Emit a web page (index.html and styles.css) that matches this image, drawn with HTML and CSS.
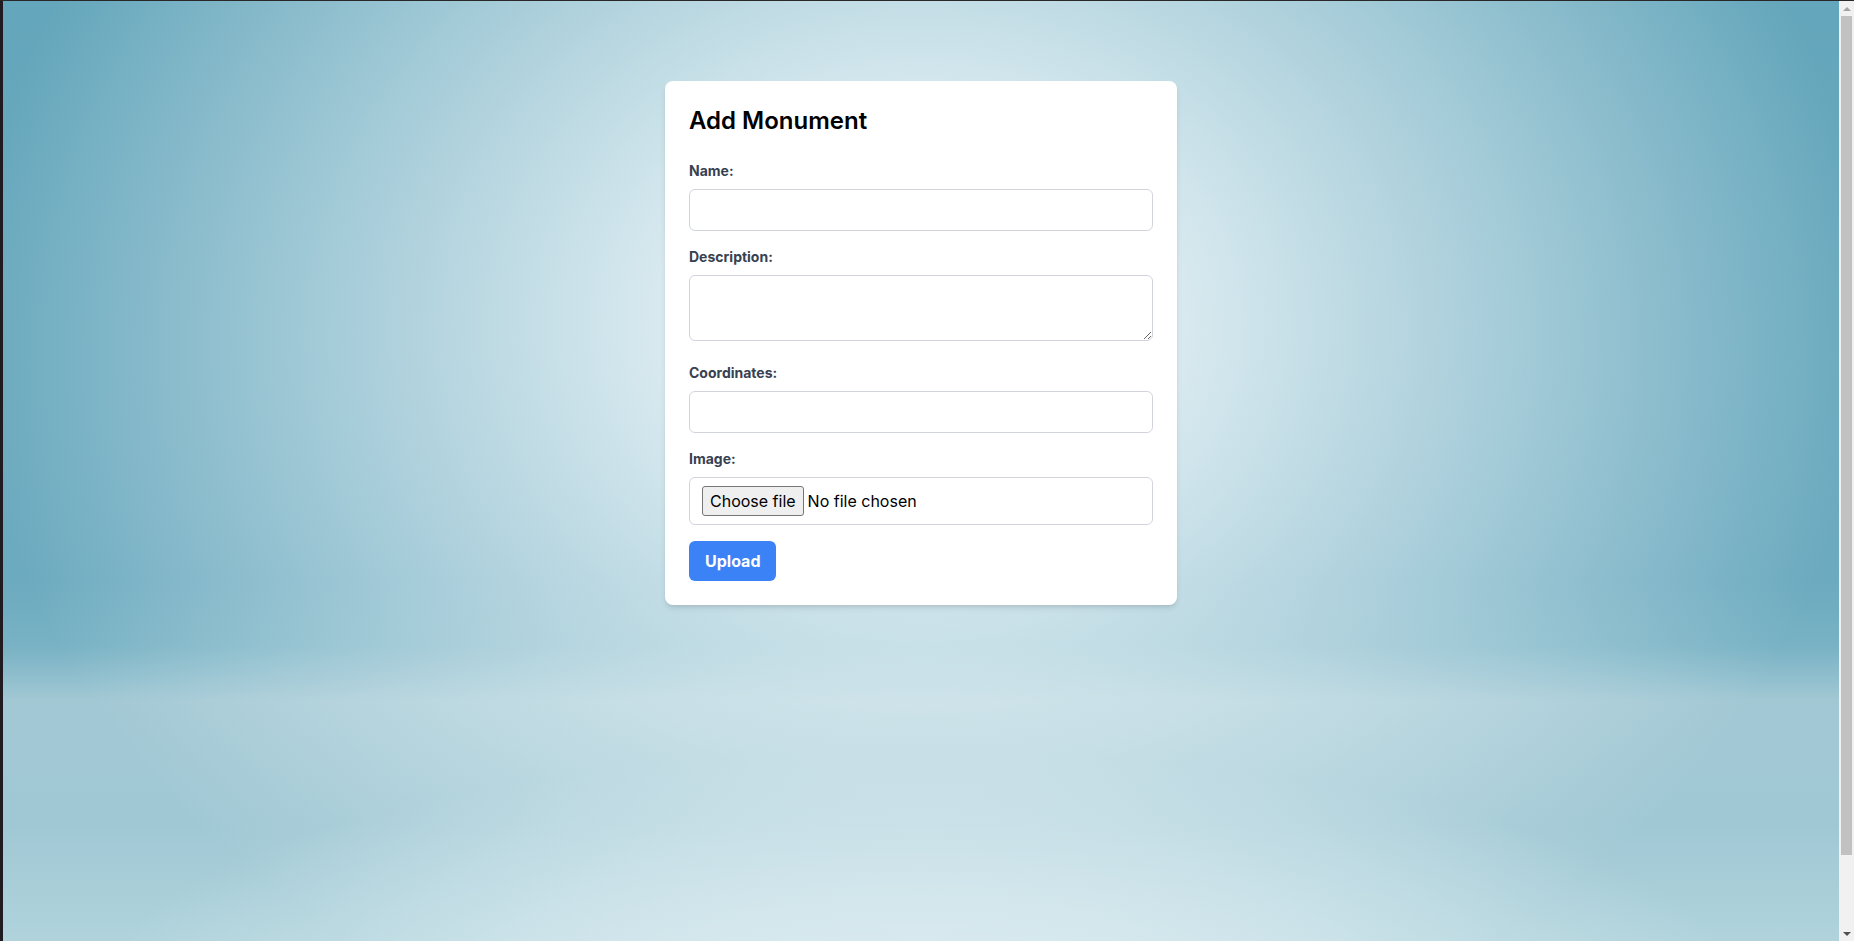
FILE: index.html
```html
<!DOCTYPE html>
<html lang="en">
<head>
<meta charset="utf-8">
<title>Add Monument</title>
<link rel="stylesheet" href="styles.css">
</head>
<body>
<div class="frame">
  <main class="viewport">
    <form class="card" onsubmit="return false">
      <h2 class="card-title">Add Monument</h2>
      <div class="field">
        <label class="field-label" for="name">Name:</label>
        <input class="field-input" id="name" type="text">
      </div>
      <div class="field">
        <label class="field-label" for="description">Description:</label>
        <textarea class="field-input" id="description" rows="2"></textarea>
      </div>
      <div class="field">
        <label class="field-label" for="coordinates">Coordinates:</label>
        <input class="field-input" id="coordinates" type="text">
      </div>
      <div class="field">
        <label class="field-label" for="image">Image:</label>
        <label class="file-picker" for="image">
          <input class="file-native" id="image" type="file">
          <span class="file-btn">Choose file</span>
          <span class="file-name">No file chosen</span>
        </label>
      </div>
      <button class="submit-btn" type="submit">Upload</button>
    </form>
  </main>
  <div class="scrollbar" aria-hidden="true">
    <div class="sb-arrow"><span class="sb-tri sb-tri-up"></span></div>
    <div class="sb-track"><div class="sb-thumb"></div></div>
    <div class="sb-arrow"><span class="sb-tri sb-tri-down"></span></div>
  </div>
</div>
</body>
</html>
```

FILE: styles.css
```css
*, *::before, *::after {
  box-sizing: border-box;
}

html, body {
  margin: 0;
  padding: 0;
  height: 100%;
  overflow: hidden;
}

body {
  font-family: Inter, "Liberation Sans", sans-serif;
  font-size: 16px;
  line-height: 1.5;
  color: #000;
  background: #1f1b21;
}

.frame {
  display: flex;
  height: 100vh;
  border-top: 1px solid #2a2729;
}

.viewport {
  flex: 1;
  min-width: 0;
  padding-top: 80px;
  border-left: 3px solid #1f1b21;
  background-color: #a9cfd9;
  background-image:
    radial-gradient(ellipse 820px 240px at 50% 990px, rgba(222, 237, 242, 0.97) 0%, rgba(222, 237, 242, 0.6) 45%, rgba(222, 237, 242, 0) 100%),
    radial-gradient(ellipse 950px 780px at 50% 320px, rgba(231, 242, 246, 1) 0%, rgba(231, 242, 246, 0.88) 28%, rgba(231, 242, 246, 0.5) 60%, rgba(231, 242, 246, 0) 100%),
    linear-gradient(to bottom, #64a6bb 0px, #6caabf 580px, #78b2c4 645px, #a2c8d4 700px, #a0c8d4 825px, #b0d3dc 940px);
}

.card {
  width: 512px;
  margin: 0 auto;
  padding: 24px;
  background: #fff;
  border-radius: 8px;
  box-shadow: 0 4px 6px -1px rgba(0, 0, 0, 0.1), 0 2px 4px -2px rgba(0, 0, 0, 0.1);
}

.card-title {
  margin: 0 0 24px;
  font-size: 24px;
  line-height: 32px;
  font-weight: 600;
  color: #000;
}

.field {
  margin-bottom: 16px;
}

.field-label {
  display: block;
  margin-bottom: 8px;
  font-size: 14px;
  line-height: 20px;
  font-weight: 700;
  color: #374151;
}

.field-input {
  width: 100%;
  margin: 0;
  padding: 8px 12px;
  font: inherit;
  line-height: 24px;
  color: #374151;
  background: #fff;
  border: 1px solid #d1d5db;
  border-radius: 6px;
  outline: none;
}

.file-picker {
  display: flex;
  align-items: center;
  width: 100%;
  padding: 8px 12px;
  background: #fff;
  border: 1px solid #d1d5db;
  border-radius: 6px;
  cursor: pointer;
}

.file-native {
  display: none;
}

.file-btn {
  display: inline-block;
  margin-right: 4px;
  padding: 2px 7px;
  line-height: 24px;
  color: #000;
  background: #efefef;
  border: 1px solid #767676;
  border-radius: 3px;
}

.file-name {
  line-height: 24px;
  color: #000;
}

.submit-btn {
  margin: 0;
  padding: 8px 16px;
  font: inherit;
  font-weight: 700;
  line-height: 24px;
  color: #fff;
  background: #3b82f6;
  border: 0;
  border-radius: 6px;
  cursor: pointer;
}

.scrollbar {
  display: flex;
  flex-direction: column;
  width: 15px;
  flex: 0 0 15px;
  background: #f1f1f1;
}

.sb-arrow {
  display: flex;
  align-items: center;
  justify-content: center;
  height: 15px;
  flex: 0 0 15px;
}

.sb-tri {
  display: block;
  width: 0;
  height: 0;
  border-left: 4px solid transparent;
  border-right: 4px solid transparent;
}

.sb-tri-up {
  border-bottom: 4px solid #a3a3a3;
}

.sb-tri-down {
  border-top: 4px solid #505050;
}

.sb-track {
  flex: 1;
  padding: 0 2px;
}

.sb-thumb {
  height: 839px;
  background: #c1c1c1;
}
```
